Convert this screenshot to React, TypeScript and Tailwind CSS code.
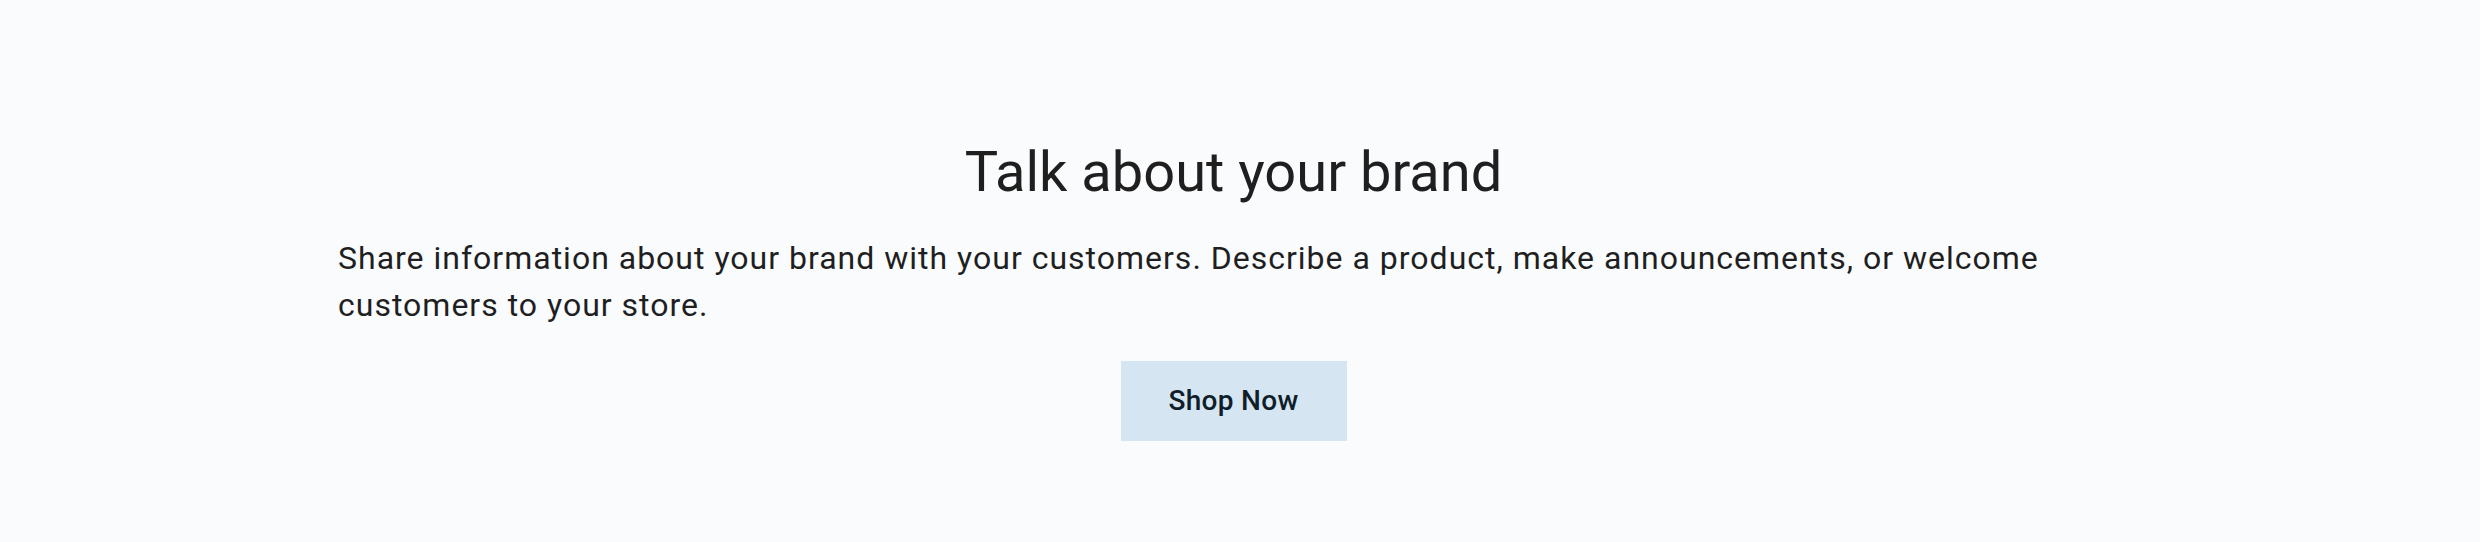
export default function App() {
  return (
    <div className="min-h-screen bg-[#f9fbfd] font-['Roboto',sans-serif]">
      <section className="pt-[139px] pb-[101px] pl-[338px] pr-[351px]">
        <div className="flex flex-col">
          <h2 className="text-center text-[56px] leading-[1.2] text-[#1f1f1f] font-normal">
            Talk about your brand
          </h2>
          <p className="mt-[29px] text-[32px] leading-[47px] tracking-[1px] text-[#1f1f1f]">
            Share information about your brand with your customers. Describe a product, make announcements, or welcome customers to your store.
          </p>
          <div className="mt-[32px] flex justify-center">
            <a
              href="#"
              className="w-[226px] h-[80px] flex items-center justify-center bg-[#d5e5f1] text-[28px] font-medium tracking-[0.3px] text-[#0f1e2a]"
            >
              Shop Now
            </a>
          </div>
        </div>
      </section>
    </div>
  );
}
